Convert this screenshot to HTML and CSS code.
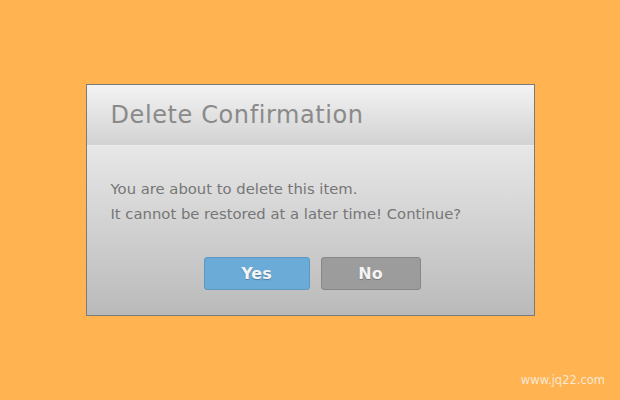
FILE: index.html
```html
<!DOCTYPE html>
<html lang="en">
<head>
  <meta charset="utf-8" />
  <title>Delete Confirmation</title>
  <link rel="stylesheet" href="styles.css">
</head>
<body>
  <div class="dialog">
    <div class="dialogHeader">
      <h1>Delete Confirmation</h1>
    </div>
    <div class="dialogBody">
      <p>You are about to delete this item.<br>It cannot be restored at a later time! Continue?</p>
      <div class="buttons">
        <button class="btn yes">Yes</button>
        <button class="btn no">No</button>
      </div>
    </div>
  </div>
  <div class="watermark">www.jq22.com</div>
</body>
</html>
```

FILE: styles.css
```css
body {
  margin: 0;
  height: 100vh;
  background-color: #ffb451;
  font-family: "DejaVu Sans", sans-serif;
  display: flex;
  align-items: center;
  justify-content: center;
}

div.dialog {
  width: 447px;
  height: 230px;
  border: 1px solid #7a7a7a;
  display: flex;
  flex-direction: column;
}

div.dialogHeader {
  height: 60px;
  background: linear-gradient(#f3f3f3, #d2d2d2);
  border-bottom: 1px solid #ececec;
  padding-left: 24px;
  display: flex;
  align-items: center;
}

div.dialogHeader h1 {
  margin: 0;
  font-size: 24px;
  font-weight: normal;
  color: #8a8a8a;
  letter-spacing: 0.6px;
}

div.dialogBody {
  flex: 1;
  background: linear-gradient(#e7e7e7, #bababa);
  padding: 30px 24px 0;
}

div.dialogBody p {
  margin: 0;
  font-size: 14.8px;
  line-height: 25px;
  color: #767676;
}

div.buttons {
  display: flex;
  justify-content: center;
  gap: 11px;
  margin-top: 31px;
  padding-left: 4px;
}

button.btn {
  height: 33px;
  border-radius: 3px;
  font-family: "DejaVu Sans", sans-serif;
  font-size: 16px;
  font-weight: bold;
  color: #f4f4f4;
  text-shadow: 0 1px 1px rgba(0, 0, 0, 0.25);
}

button.yes {
  width: 106px;
  background-color: #6aabd8;
  border: 1px solid #5c98c2;
}

button.no {
  width: 100px;
  background-color: #9c9c9c;
  border: 1px solid #878787;
}

div.watermark {
  position: absolute;
  right: 15px;
  bottom: 13px;
  font-size: 11.5px;
  color: #f6e8d4;
}
```
